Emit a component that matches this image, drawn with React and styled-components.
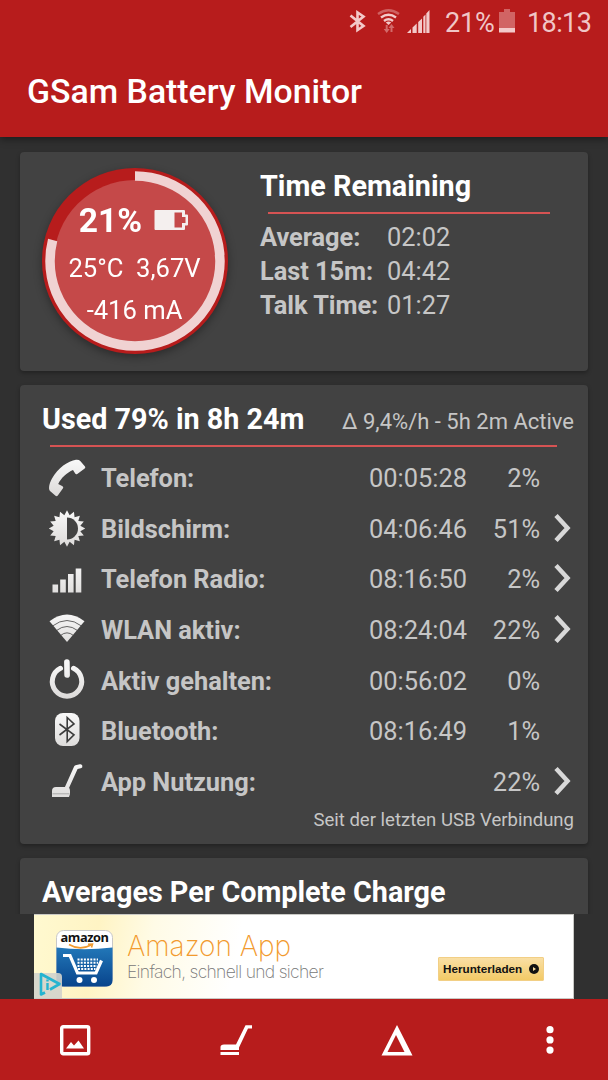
import React from "react";
import styled, { createGlobalStyle } from "styled-components";

const GlobalStyle = createGlobalStyle`
  * { box-sizing: border-box; }
  body { margin: 0; background: #303030; font-family: Roboto, "Liberation Sans", sans-serif; }
`;

const Screen = styled.div`
  width: 608px;
  height: 1080px;
  display: flex;
  flex-direction: column;
  overflow: hidden;
  background: #303030;
  color: #c6c6c6;
  white-space: nowrap;
`;

const Header = styled.header`
  height: 137px;
  flex: none;
  background: #b71c1c;
  box-shadow: 0 2px 8px rgba(0, 0, 0, 0.45);
  z-index: 1;
`;

const StatusBar = styled.div`
  height: 44px;
  display: flex;
  justify-content: flex-end;
  align-items: center;
  padding-right: 17px;
  font-size: 27px;
  line-height: 44px;
  color: #f0c6c6;
`;

const StatusIcons = styled.svg`
  width: 82px;
  height: 44px;
  margin-right: 14px;
`;

const StatusText = styled.span`
  width: ${(p) => p.$w}px;
  padding-top: 1px;
  letter-spacing: ${(p) => p.$ls || 0}px;
`;

const StatusBattery = styled.svg`
  width: 16px;
  height: 44px;
  margin: 0 12px 0 5px;
`;

const AppTitle = styled.h1`
  margin: 0;
  padding-left: 27px;
  font-size: 33.8px;
  line-height: 95px;
  font-weight: 500;
  color: #fff;
`;

const Content = styled.main`
  height: 777px;
  flex: none;
  overflow: hidden;
  display: flex;
  flex-direction: column;
  gap: 14px;
  padding: 15px 20px 0;
`;

const Card = styled.section`
  flex: none;
  height: ${(p) => p.$h}px;
  border-radius: 4px;
  background: #424242;
  box-shadow: 0 2px 4px rgba(0, 0, 0, 0.3);
`;

const SummaryCard = styled(Card)`
  display: flex;
  padding: 16px 0 0 22px;
`;

const Gauge = styled.div`
  display: grid;
  width: 186px;
  height: 186px;
  border-radius: 50%;
  filter: drop-shadow(0 3px 4px rgba(0, 0, 0, 0.35));
  & > * { grid-area: 1 / 1; }
`;

const GaugeText = styled.div`
  display: flex;
  flex-direction: column;
  align-items: center;
  padding-top: 28px;
  padding-right: 1px;
  color: #fff;
  z-index: 1;
`;

const GaugeLevel = styled.div`
  display: flex;
  align-items: center;
  gap: 12px;
  padding-right: 2px;
  height: 48px;
  font-size: 33.6px;
  font-weight: 700;
  & > svg { margin-top: -1px; }
`;

const GaugeLine = styled.div`
  height: ${(p) => p.$h}px;
  line-height: ${(p) => p.$h}px;
  font-size: 25.6px;
  white-space: pre;
`;

const Remaining = styled.div`
  padding: 0 0 0 32px;
`;

const Heading = styled.h2`
  margin: 0;
  font-size: 28.75px;
  line-height: 36px;
  font-weight: 700;
  color: #fff;
`;

const Rule = styled.div`
  width: ${(p) => p.$w}px;
  height: 2px;
  margin: ${(p) => p.$m};
  background: #d65353;
`;

const TimeRow = styled.div`
  display: flex;
  height: 34px;
  line-height: 34px;
  font-size: 25.4px;
`;

const TimeLabel = styled.span`
  width: 127px;
  font-weight: 700;
  letter-spacing: -0.05px;
`;

const UsageCard = styled(Card)`
  padding: 16px 0 0 22px;
`;

const UsageHead = styled.div`
  display: flex;
  justify-content: space-between;
  height: 40px;
  padding-right: 14px;
`;

const Rate = styled.span`
  font-size: 22px;
  line-height: 42px;
`;

const UsageRow = styled.div`
  display: grid;
  grid-template-columns: 59px 1fr 130px 73px 48px;
  align-items: center;
  height: 50.6px;
  font-size: 25.4px;
`;

const RowIcon = styled.svg`
  width: 50px;
  height: 44px;
`;

const RowLabel = styled.span`
  font-weight: 700;
  letter-spacing: -0.04px;
`;

const RowValue = styled.span`
  text-align: right;
`;

const Chevron = styled.svg`
  width: 19px;
  height: 34px;
  margin: -2px 0 0 12px;
`;

const Since = styled.div`
  padding-right: 14px;
  text-align: right;
  font-size: 18.55px;
  line-height: 26px;
`;

const AverageCard = styled(Card)`
  padding: 16px 0 0 22px;
`;

const Ad = styled.aside`
  flex: none;
  display: flex;
  width: 540px;
  height: 85px;
  margin-left: 34px;
  padding: 16px 0 0 22px;
  background: linear-gradient(100deg, #fff9d0 0, #fff4c4 12%, #fffbe6 22%, #fff 38%);
  border: 1px solid #c9c9c5;
  border-left: 0;
  position: relative;
`;

const AdLogo = styled.div`
  width: 57px;
  height: 56px;
  margin-top: -1px;
  display: grid;
  & > * { grid-area: 1 / 1; }
`;

const AdBrand = styled.span`
  z-index: 1;
  text-align: center;
  font: 700 12.8px/15px "Open Sans", sans-serif;
  letter-spacing: -0.4px;
  color: #111;
`;

const AdCopy = styled.div`
  width: 310px;
  padding-left: 14px;
`;

const AdTitle = styled.div`
  font: 200 28px/31px Inter, sans-serif;
  letter-spacing: -0.05px;
  color: #f29a2e;
`;

const AdText = styled.div`
  font: 200 17.5px/19px Inter, sans-serif;
  letter-spacing: -0.7px;
  color: #777;
`;

const AdButton = styled.div`
  display: flex;
  align-items: center;
  justify-content: space-between;
  width: 106px;
  height: 24px;
  margin: 26px 0 0 15px;
  padding: 0 4px;
  border-radius: 1px;
  border: 1px solid #f2cf85;
  background: linear-gradient(#f9dfa5, #f3ca66);
  font: 700 11.7px/22px "Liberation Sans", sans-serif;
  color: #111;
`;

const AdChoices = styled.svg`
  position: absolute;
  left: 0;
  bottom: 0;
`;

const BottomBar = styled.nav`
  flex: none;
  height: 81px;
  display: flex;
  align-items: center;
  padding-left: 59px;
  gap: 129px;
  background: #b71c1c;
  & > svg { width: 32px; height: 32px; }
`;

const G = "url(#shade)";

const icons = {
  phone: (
    <path fill={G} d="M38.5 5.2 43 10.5Q43.8 11.700 42.700 12.600L35.300 18Q34 18.800 33.200 17.600L31 14C25 16.500 19 22 16.200 28L20.500 30.200Q21.800 31 21 32.200L15.800 39.600Q14.800 40.800 13.500 39.800L8 35C6 32.500 7.500 27 10 22.500C16 12 26 5 34 3.800Q37 3.500 38.500 5.200Z" />
  ),
  screen: (
    <>
      <path fill={G} d={Array.from({ length: 32 }, (_, i) => {
        const r = i % 2 ? 13.6 : 18.2;
        const a = (i * Math.PI) / 16 - Math.PI / 2;
        return `${i ? "L" : "M"}${(25 + r * Math.cos(a)).toFixed(2)} ${(21.500 + r * Math.sin(a)).toFixed(2)}`;
      }).join("") + "Z"} />
      <path fill="#424242" d="M25 10.500A11 11 0 0 1 25 32.500Z" />
    </>
  ),
  signal: (
    <path fill={G} d="M10.500 27.500h5.600v8h-5.600zM18.200 22.500h5.600v13h-5.600zM26 17h5.600V35.500H26zM33.700 11.500h5.600v24h-5.600z" />
  ),
  wifi: (
    <>
      <path fill={G} d="M7.500 13.200Q25 0 42.500 13.200L25 34Z" />
      <path fill="none" stroke="#424242" strokeWidth="1" opacity=".8" d="M10.500 18Q25 7 39.500 18M14.500 22.500Q25 14.500 35.500 22.500M18.500 27.500Q25 22.200 31.500 27.500" />
    </>
  ),
  power: (
    <g fill="none" stroke={G} strokeWidth="5" strokeLinecap="round">
      <path d="M18.500 9.300A14.700 14.700 0 1 0 31.500 9.300" />
      <path d="M24.900 3 25.100 16" strokeWidth="5.600" />
    </g>
  ),
  bluetooth: (
    <>
      <rect x="13" y="4" width="24.500" height="33" rx="8" fill={G} />
      <path fill="none" stroke="#3c3c3c" strokeWidth="1.600" d="M17.500 15 32 25.800 25.200 32.500V8.500L32 15 17.500 26" />
    </>
  ),
  vacuum: (
    <>
      <path fill="none" stroke={G} strokeWidth="4.200" strokeLinecap="round" strokeLinejoin="round" d="M24.500 28.500 34 7.300 38.300 6.300" />
      <path fill={G} d="M10 37V31Q10 27 14 27H26.500Q28 28.500 28 30.500V34L27 37Z" />
      <path fill="#aaa" d="M10.500 33.300H27.500V34.300H10.500z" />
    </>
  ),
};

const usage = [
  { icon: "phone", label: "Telefon:", time: "00:05:28", pct: "2%" },
  { icon: "screen", label: "Bildschirm:", time: "04:06:46", pct: "51%", more: true },
  { icon: "signal", label: "Telefon Radio:", time: "08:16:50", pct: "2%", more: true },
  { icon: "wifi", label: "WLAN aktiv:", time: "08:24:04", pct: "22%", more: true },
  { icon: "power", label: "Aktiv gehalten:", time: "00:56:02", pct: "0%" },
  { icon: "bluetooth", label: "Bluetooth:", time: "08:16:49", pct: "1%" },
  { icon: "vacuum", label: "App Nutzung:", time: "", pct: "22%", more: true },
];

const remaining = [
  ["Average:", "02:02"],
  ["Last 15m:", "04:42"],
  ["Talk Time:", "01:27"],
];

export default function App() {
  return (
    <Screen>
      <GlobalStyle />
      <svg width="0" height="0" style={{ position: "absolute" }}>
        <linearGradient id="shade" gradientUnits="userSpaceOnUse" x1="0" y1="4" x2="0" y2="40">
          <stop offset="0" stopColor="#f8f8f8" />
          <stop offset="1" stopColor="#dcdad9" />
        </linearGradient>
      </svg>

      <Header>
        <StatusBar>
          <StatusIcons viewBox="350 0 82 44">
            <path fill="none" stroke="#f3caca" strokeWidth="2.600" d="M351.500 15.500 364.500 26 358.500 30V12.500L364.500 16.500 351.500 27" />
            <g transform="translate(1 0)">
              <g fill="none" stroke="#f3caca" strokeWidth="2.400">
                <path d="M378 14Q388.500 6.500 399 14" opacity=".4" />
                <path d="M381 17.500Q388.500 12 396 17.500" />
                <path d="M384 21Q388.500 17.500 393 21" />
              </g>
              <path fill="#f3caca" d="M385.800 22.500Q388.500 20.500 391.200 22.500L388.500 25z" />
              <path fill="#f3caca" opacity=".45" d="M385.700 25h2v4h2l-3 4-3-4h2zM390.500 32v-4h-2l3-4 3 4h-2v4z" />
              <path fill="#f3caca" d="M407 33 411 29V33zM412.500 27.500 416.700 23.500V33h-4.200zM418.200 22 422 18.500V33h-3.800zM423.300 16.800 425.500 14.500V33h-2.200zM426.300 13.500 429.500 10V33h-3.200z" />
            </g>
          </StatusIcons>
          <StatusText $w={49} $ls={-0.2}>21%</StatusText>
          <StatusBattery viewBox="0 0 16 44">
            <path fill="#d16464" d="M5 9h6v3h5v20H0V12h5z" />
            <path fill="#f3caca" d="M0 28h16v4.500H0z" />
          </StatusBattery>
          <StatusText $w={64} $ls={-0.6}>18:13</StatusText>
        </StatusBar>
        <AppTitle>GSam Battery Monitor</AppTitle>
      </Header>

      <Content>
        <SummaryCard $h={219}>
          <Gauge>
            <svg width="186" height="186" viewBox="0 0 186 186">
              <circle cx="93" cy="93" r="93" fill="#b71c1c" />
              <circle cx="93" cy="93" r="81" fill="#c54949" />
              <circle cx="93" cy="93" r="85" fill="none" stroke="#f0d2d2" strokeWidth="9.500" pathLength="100" strokeDasharray="79 21" transform="rotate(-90 93 93)" />
            </svg>
            <GaugeText>
              <GaugeLevel>
                21%
                <svg width="34" height="22" viewBox="0 0 34 22">
                  <path fill="#f4efee" fillRule="evenodd" d="M1.500 1H30Q31 1 31 2V5.500H33Q34 5.500 34 6.500V15.500Q34 16.500 33 16.500H31V20Q31 21 30 21H1.500Q.5 21 .5 20V2Q.5 1 1.500 1ZM20.500 3.500V18.500H28V14H31.500V8H28V3.500Z" />
                </svg>
              </GaugeLevel>
              <GaugeLine $h={48}>25°C  3,67V</GaugeLine>
              <GaugeLine $h={37}>-416 mA</GaugeLine>
            </GaugeText>
          </Gauge>
          <Remaining>
            <Heading>Time Remaining</Heading>
            <Rule $w={282} $m="8px 0 6px 8px" />
            {remaining.map(([label, value]) => (
              <TimeRow key={label}>
                <TimeLabel>{label}</TimeLabel>
                <span>{value}</span>
              </TimeRow>
            ))}
          </Remaining>
        </SummaryCard>

        <UsageCard $h={459}>
          <UsageHead>
            <Heading>Used 79% in 8h 24m</Heading>
            <Rate>Δ 9,4%/h - 5h 2m Active</Rate>
          </UsageHead>
          <Rule $w={507} $m="4px 0 6px 8px" />
          {usage.map((row) => (
            <UsageRow key={row.label}>
              <RowIcon viewBox="0 0 50 44">{icons[row.icon]}</RowIcon>
              <RowLabel>{row.label}</RowLabel>
              <RowValue>{row.time}</RowValue>
              <RowValue>{row.pct}</RowValue>
              {row.more && (
                <Chevron viewBox="0 0 19 34">
                  <path d="M4 4.500 15.500 17 4 29.500" fill="none" stroke="#d8d8d8" strokeWidth="4.500" />
                </Chevron>
              )}
            </UsageRow>
          ))}
          <Since>Seit der letzten USB Verbindung</Since>
        </UsageCard>

        <AverageCard $h={80}>
          <Heading>Averages Per Complete Charge</Heading>
        </AverageCard>
      </Content>

      <Ad>
        <AdLogo>
          <svg width="57" height="57" viewBox="0 0 57 57">
            <defs>
              <linearGradient id="blue" x1="0" y1="0" x2="0" y2="1">
                <stop offset="0" stopColor="#2277b8" />
                <stop offset="1" stopColor="#08448c" />
              </linearGradient>
            </defs>
            <rect x=".5" y=".5" width="56" height="56" rx="7" fill="#fff" stroke="#c8c8c8" />
            <path fill="url(#blue)" d="M.5 17.500Q28 21 56.500 17.500V50Q56.500 56.500 50 56.500H7Q.5 56.500.5 50Z" />
            <path fill="none" stroke="#f29a2e" strokeWidth="1.600" d="M13 14.500Q24 21 35 15M32 14.200 36.500 14 35.500 17.500" />
            <path fill="none" stroke="#fff" strokeWidth="3.200" d="M7 25.500H14L21.500 43H40L45.500 30.500" />
            <path fill="none" stroke="#fff" strokeWidth="2" strokeDasharray="2 1.200" d="M21.500 29.500H42M21.500 32.700H42M21.500 35.900H41M22 39.100H39.500" />
            <circle cx="23.500" cy="50" r="3" fill="#fff" />
            <circle cx="38" cy="50" r="3" fill="#fff" />
          </svg>
          <AdBrand>amazon</AdBrand>
        </AdLogo>
        <AdCopy>
          <AdTitle>Amazon App</AdTitle>
          <AdText>Einfach, schnell und sicher</AdText>
        </AdCopy>
        <AdButton>
          Herunterladen
          <svg width="10" height="10" viewBox="0 0 10 10">
            <circle cx="5" cy="5" r="5" fill="#111" />
            <path d="M4 3 7 5 4 7z" fill="#f8dc9d" />
          </svg>
        </AdButton>
        <AdChoices width="28" height="26" viewBox="0 0 28 26">
          <path fill="#d3d3cc" opacity=".9" d="M0 1H24Q28 1 28 5V26H0Z" />
          <path fill="none" stroke="#25b4d0" strokeWidth="2.600" strokeLinejoin="round" d="M11 20.500 7 22.500V2L25.500 12 16 17.500" />
          <path stroke="#25b4d0" strokeWidth="2.400" d="M13.500 11V18M13.500 7.500V9.500" />
        </AdChoices>
      </Ad>

      <BottomBar>
        <svg viewBox="0 0 32 32">
          <rect x="2.700" y="2.700" width="27" height="27" rx="1.500" fill="none" stroke="#fff" strokeWidth="3.400" />
          <path fill="#fff" d="M7 24.500 12 18 15 21.500 19.500 16.500 25 24.500z" />
        </svg>
        <svg viewBox="0 0 32 32">
          <path fill="#fff" d="M.5 26V23Q.5 20.500 4 20.500H16L25.500 1.200H32V4.500H28L19 23.500V26ZM.5 28H19V31H.5Z" />
        </svg>
        <svg viewBox="0 0 32 32">
          <path fill="#fff" fillRule="evenodd" d="M16 1 31.500 31.500H.5ZM15 11 6.500 28H23.500Z" />
        </svg>
        <svg viewBox="0 0 32 32">
          <circle cx="8" cy="5.700" r="3.600" fill="#fff" />
          <circle cx="8" cy="15.900" r="3.600" fill="#fff" />
          <circle cx="8" cy="26.100" r="3.600" fill="#fff" />
        </svg>
      </BottomBar>
    </Screen>
  );
}
